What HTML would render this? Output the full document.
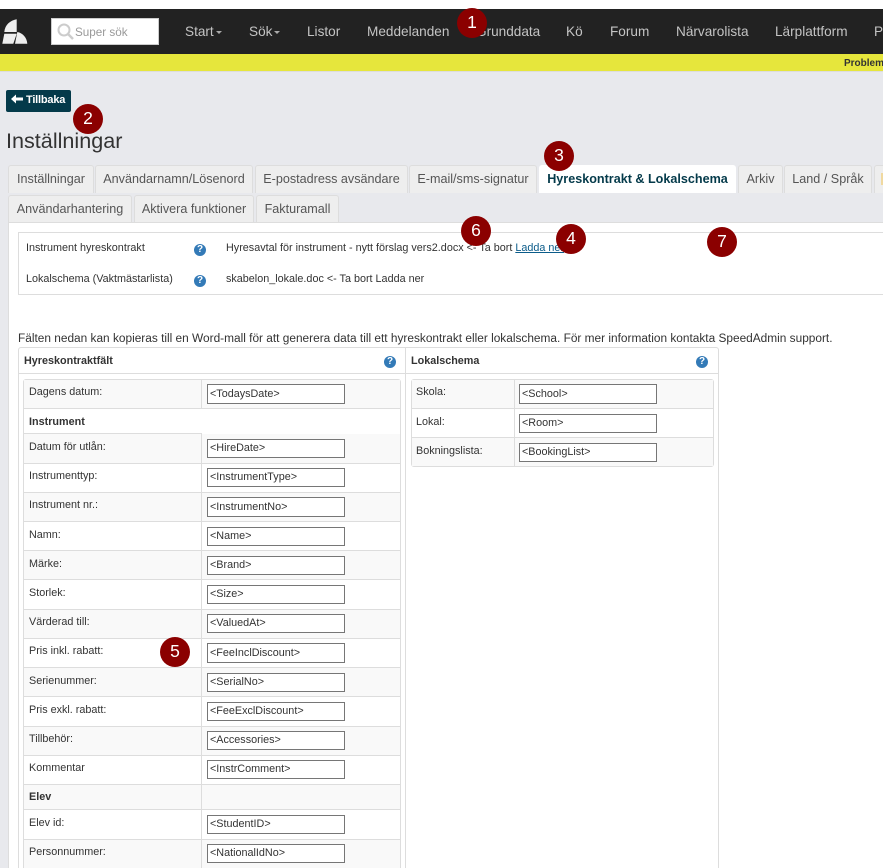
<!DOCTYPE html>
<html><head><meta charset="utf-8"><style>
html,body{margin:0;padding:0;width:883px;height:868px;overflow:hidden}
body{position:relative;background:#fff;font-family:"Liberation Sans",Arial,sans-serif;color:#333}
#w{position:absolute;left:0;top:0;width:883px;height:868px;overflow:hidden}
.a,.a *{box-sizing:border-box}
.a{position:absolute;white-space:nowrap}
.nav{font-size:13.6px;line-height:30px;height:30px;color:#c4c4c4;top:17px}
.car{display:inline-block;width:0;height:0;border:3px solid transparent;border-top-color:#aaa;border-bottom:0;vertical-align:middle;margin-left:2px}
.tab{height:28px;background:#eee;border:1px solid #ddd;border-bottom:0;border-radius:3px 3px 0 0;font-size:12.6px;line-height:27px;text-align:center;color:#555}
.b{width:30px;height:30px;border-radius:50%;background:#8b0000;color:#fff;font-size:17.5px;line-height:28px;text-align:center;z-index:5}
.t{font-size:10.8px;line-height:14px;color:#333;margin-top:1px}
.r{left:24px;width:376px;border-bottom:1px solid #ddd}
.r2{border-bottom:1px solid #ddd}
.in{left:207px;width:138px;height:19px;border:1px solid #767676;background:#fff;font-size:10.8px;line-height:17px;padding-left:2px;color:#333}
.h{height:20px;line-height:18px}
.q{width:12px;height:12px;border-radius:50%;background:#337ab7;color:#fff;font:bold 10px/12px "Liberation Sans",sans-serif;text-align:center}
</style></head><body><div id="w">
<div class="a" style="left:0;top:9px;width:883px;height:45px;background:#222"></div>
<div class="a" style="left:0;top:54px;width:883px;height:18px;background:#e6e63c;border-bottom:1px solid #ddd"></div>
<div class="a" style="left:0;top:72px;width:883px;height:796px;background:#e8e9ed"></div>
<svg class="a" style="left:0;top:0" width="30" height="50" viewBox="0 0 30 50"><path fill="#eee" d="M16.7 19.3C10 20.5 5 25 4.3 32H16.7ZM4.3 33.7H16.7L13.3 43.7H2.3ZM17.3 32C23 33 27 38 27.3 43.7H15Z"/></svg>
<div class="a" style="left:51px;top:18px;width:108px;height:27px;background:#fff;border:1px solid #ccc"></div>
<svg class="a" style="left:57px;top:23px" width="18" height="18" viewBox="0 0 18 18"><circle cx="7" cy="7" r="5.5" fill="none" stroke="#ccc" stroke-width="2"/><path d="M11 11L16 16" stroke="#ccc" stroke-width="2.5"/></svg>
<div class="a" style="left:75px;top:26px;font-size:11.7px;line-height:14px;color:#999">Super sök</div>
<div class="a nav" style="left:185px">Start<span class="car"></span></div>
<div class="a nav" style="left:249px">Sök<span class="car"></span></div>
<div class="a nav" style="left:307px">Listor</div>
<div class="a nav" style="left:367px">Meddelanden</div>
<div class="a nav" style="left:476px">Grunddata</div>
<div class="a nav" style="left:566px">Kö</div>
<div class="a nav" style="left:610px">Forum</div>
<div class="a nav" style="left:676px">Närvarolista</div>
<div class="a nav" style="left:775px">Lärplattform</div>
<div class="a nav" style="left:874px">P</div>
<div class="a" style="left:844px;top:58px;font-size:10px;font-weight:bold;line-height:12px;color:#333">Problem</div>
<div class="a" style="left:6px;top:90px;width:65px;height:22px;background:#043a4a;border-radius:2px;color:#fff;font-size:11px;font-weight:bold;line-height:21px;padding-left:5px;letter-spacing:-.2px"><svg width="12" height="10" viewBox="0 0 12 10" style="vertical-align:-1px;margin-right:3px"><path d="M0 5L5 0.5V3.5H12V6.5H5V9.5Z" fill="#fff"/></svg>Tillbaka</div>
<div class="a" style="left:6px;top:127px;font-size:21.6px;line-height:28px;color:#333">Inställningar</div>
<div class="a tab" style="left:8px;top:165px;width:86px">Inställningar</div>
<div class="a tab" style="left:95px;top:165px;width:158px">Användarnamn/Lösenord</div>
<div class="a tab" style="left:255px;top:165px;width:153px">E-postadress avsändare</div>
<div class="a tab" style="left:409px;top:165px;width:128px">E-mail/sms-signatur</div>
<div class="a tab" style="left:539px;top:165px;width:197px;background:#fff;border-color:#fff;font-weight:bold;color:#043a4a">Hyreskontrakt &amp; Lokalschema</div>
<div class="a tab" style="left:738px;top:165px;width:45px">Arkiv</div>
<div class="a tab" style="left:784px;top:165px;width:88px">Land / Språk</div>
<div class="a tab" style="left:874px;top:165px;width:20px"></div>
<div class="a" style="left:881px;top:173px;width:2px;height:12px;background:#f0d9a0"></div>
<div class="a tab" style="left:8px;top:195px;width:124px">Användarhantering</div>
<div class="a tab" style="left:134px;top:195px;width:120px">Aktivera funktioner</div>
<div class="a tab" style="left:256px;top:195px;width:83px">Fakturamall</div>
<div class="a" style="left:8px;top:222px;width:875px;height:646px;background:#fff;border-top:1px solid #ddd;border-left:1px solid #ddd"></div>
<div class="a" style="left:18px;top:232px;width:870px;height:63px;border:1px solid #ddd"></div>
<div class="a t" style="left:26px;top:240px">Instrument hyreskontrakt</div>
<div class="a q" style="left:194px;top:244px">?</div>
<div class="a t" style="left:226px;top:240px">Hyresavtal för instrument - nytt förslag vers2.docx &lt;- Ta bort <span style="color:#0b5c8a;text-decoration:underline">Ladda ner</span></div>
<div class="a t" style="left:26px;top:271px">Lokalschema (Vaktmästarlista)</div>
<div class="a q" style="left:194px;top:275px">?</div>
<div class="a t" style="left:226px;top:271px">skabelon_lokale.doc &lt;- Ta bort Ladda ner</div>
<div class="a" style="left:18px;top:331px;font-size:11.87px;line-height:14px;color:#333">Fälten nedan kan kopieras till en Word-mall för att generera data till ett hyreskontrakt eller lokalschema. För mer information kontakta SpeedAdmin support.</div>
<div class="a" style="left:18px;top:347px;width:701px;height:530px;border:1px solid #ddd;border-radius:3px"></div>
<div class="a" style="left:405px;top:347px;width:1px;height:530px;background:#ddd"></div>
<div class="a" style="left:18px;top:373px;width:701px;height:1px;background:#ddd"></div>
<div class="a t" style="left:24px;top:353px;font-weight:bold">Hyreskontraktfält</div>
<div class="a q" style="left:384px;top:356px">?</div>
<div class="a t" style="left:411px;top:353px;font-weight:bold">Lokalschema</div>
<div class="a q" style="left:696px;top:356px">?</div>
<!-- left table -->
<div class="a" style="left:23px;top:379px;width:378px;height:500px;border:1px solid #ddd;border-radius:3px"></div>
<div class="a r" style="top:380px;height:29px;background:#f9f9f9"></div>
<div class="a r" style="top:409px;height:25px;background:#fff;border-bottom:0"></div>
<div class="a r" style="top:434px;height:30px;background:#f9f9f9"></div>
<div class="a r" style="top:464px;height:29px"></div>
<div class="a r" style="top:493px;height:29px;background:#f9f9f9"></div>
<div class="a r" style="top:522px;height:29px"></div>
<div class="a r" style="top:551px;height:29px;background:#f9f9f9"></div>
<div class="a r" style="top:580px;height:30px"></div>
<div class="a r" style="top:610px;height:29px;background:#f9f9f9"></div>
<div class="a r" style="top:639px;height:29px"></div>
<div class="a r" style="top:668px;height:29px;background:#f9f9f9"></div>
<div class="a r" style="top:697px;height:30px"></div>
<div class="a r" style="top:727px;height:29px;background:#f9f9f9"></div>
<div class="a r" style="top:756px;height:29px"></div>
<div class="a r" style="top:785px;height:25px;background:#f9f9f9"></div>
<div class="a r" style="top:810px;height:30px"></div>
<div class="a r" style="top:840px;height:29px;background:#f9f9f9"></div>
<div class="a" style="left:201px;top:380px;width:1px;height:29px;background:#ddd"></div>
<div class="a" style="left:201px;top:433px;width:1px;height:435px;background:#ddd"></div>
<div class="a" style="left:24px;top:433px;width:177px;height:1px;background:#ddd"></div>
<div class="a t" style="left:29px;top:384px">Dagens datum:</div><div class="a in h" style="top:384px">&lt;TodaysDate&gt;</div>
<div class="a t" style="left:29px;top:414px;font-weight:bold">Instrument</div>
<div class="a t" style="left:29px;top:439px">Datum för utlån:</div><div class="a in" style="top:439px">&lt;HireDate&gt;</div>
<div class="a t" style="left:29px;top:468px">Instrumenttyp:</div><div class="a in" style="top:468px">&lt;InstrumentType&gt;</div>
<div class="a t" style="left:29px;top:497px">Instrument nr.:</div><div class="a in h" style="top:497px">&lt;InstrumentNo&gt;</div>
<div class="a t" style="left:29px;top:527px">Namn:</div><div class="a in" style="top:527px">&lt;Name&gt;</div>
<div class="a t" style="left:29px;top:556px">Märke:</div><div class="a in" style="top:556px">&lt;Brand&gt;</div>
<div class="a t" style="left:29px;top:585px">Storlek:</div><div class="a in" style="top:585px">&lt;Size&gt;</div>
<div class="a t" style="left:29px;top:614px">Värderad till:</div><div class="a in" style="top:614px">&lt;ValuedAt&gt;</div>
<div class="a t" style="left:29px;top:643px">Pris inkl. rabatt:</div><div class="a in h" style="top:643px">&lt;FeeInclDiscount&gt;</div>
<div class="a t" style="left:29px;top:673px">Serienummer:</div><div class="a in" style="top:673px">&lt;SerialNo&gt;</div>
<div class="a t" style="left:29px;top:702px">Pris exkl. rabatt:</div><div class="a in" style="top:702px">&lt;FeeExclDiscount&gt;</div>
<div class="a t" style="left:29px;top:731px">Tillbehör:</div><div class="a in" style="top:731px">&lt;Accessories&gt;</div>
<div class="a t" style="left:29px;top:760px">Kommentar</div><div class="a in" style="top:760px">&lt;InstrComment&gt;</div>
<div class="a t" style="left:29px;top:789px;font-weight:bold">Elev</div>
<div class="a t" style="left:29px;top:815px">Elev id:</div><div class="a in" style="top:815px">&lt;StudentID&gt;</div>
<div class="a t" style="left:29px;top:844px">Personnummer:</div><div class="a in" style="top:844px">&lt;NationalIdNo&gt;</div>
<!-- right table -->
<div class="a" style="left:411px;top:379px;width:303px;height:88px;border:1px solid #ddd;border-radius:3px;background:#fff"></div>
<div class="a r2" style="top:380px;height:29px;background:#f9f9f9;left:412px;width:301px"></div>
<div class="a r2" style="top:409px;height:29px;left:412px;width:301px"></div>
<div class="a" style="top:438px;height:28px;background:#f9f9f9;left:412px;width:301px"></div>
<div class="a" style="left:514px;top:380px;width:1px;height:86px;background:#ddd"></div>
<div class="a t" style="left:416px;top:384px">Skola:</div><div class="a in h" style="left:519px;top:384px">&lt;School&gt;</div>
<div class="a t" style="left:416px;top:414px">Lokal:</div><div class="a in" style="left:519px;top:414px">&lt;Room&gt;</div>
<div class="a t" style="left:416px;top:443px">Bokningslista:</div><div class="a in" style="left:519px;top:443px">&lt;BookingList&gt;</div>
<!-- badges -->
<div class="a b" style="left:457px;top:8px">1</div>
<div class="a b" style="left:73px;top:104px">2</div>
<div class="a b" style="left:544px;top:141px">3</div>
<div class="a b" style="left:556px;top:224px">4</div>
<div class="a b" style="left:160px;top:637px">5</div>
<div class="a b" style="left:461px;top:216px">6</div>
<div class="a b" style="left:707px;top:227px">7</div>
</div></body></html>
